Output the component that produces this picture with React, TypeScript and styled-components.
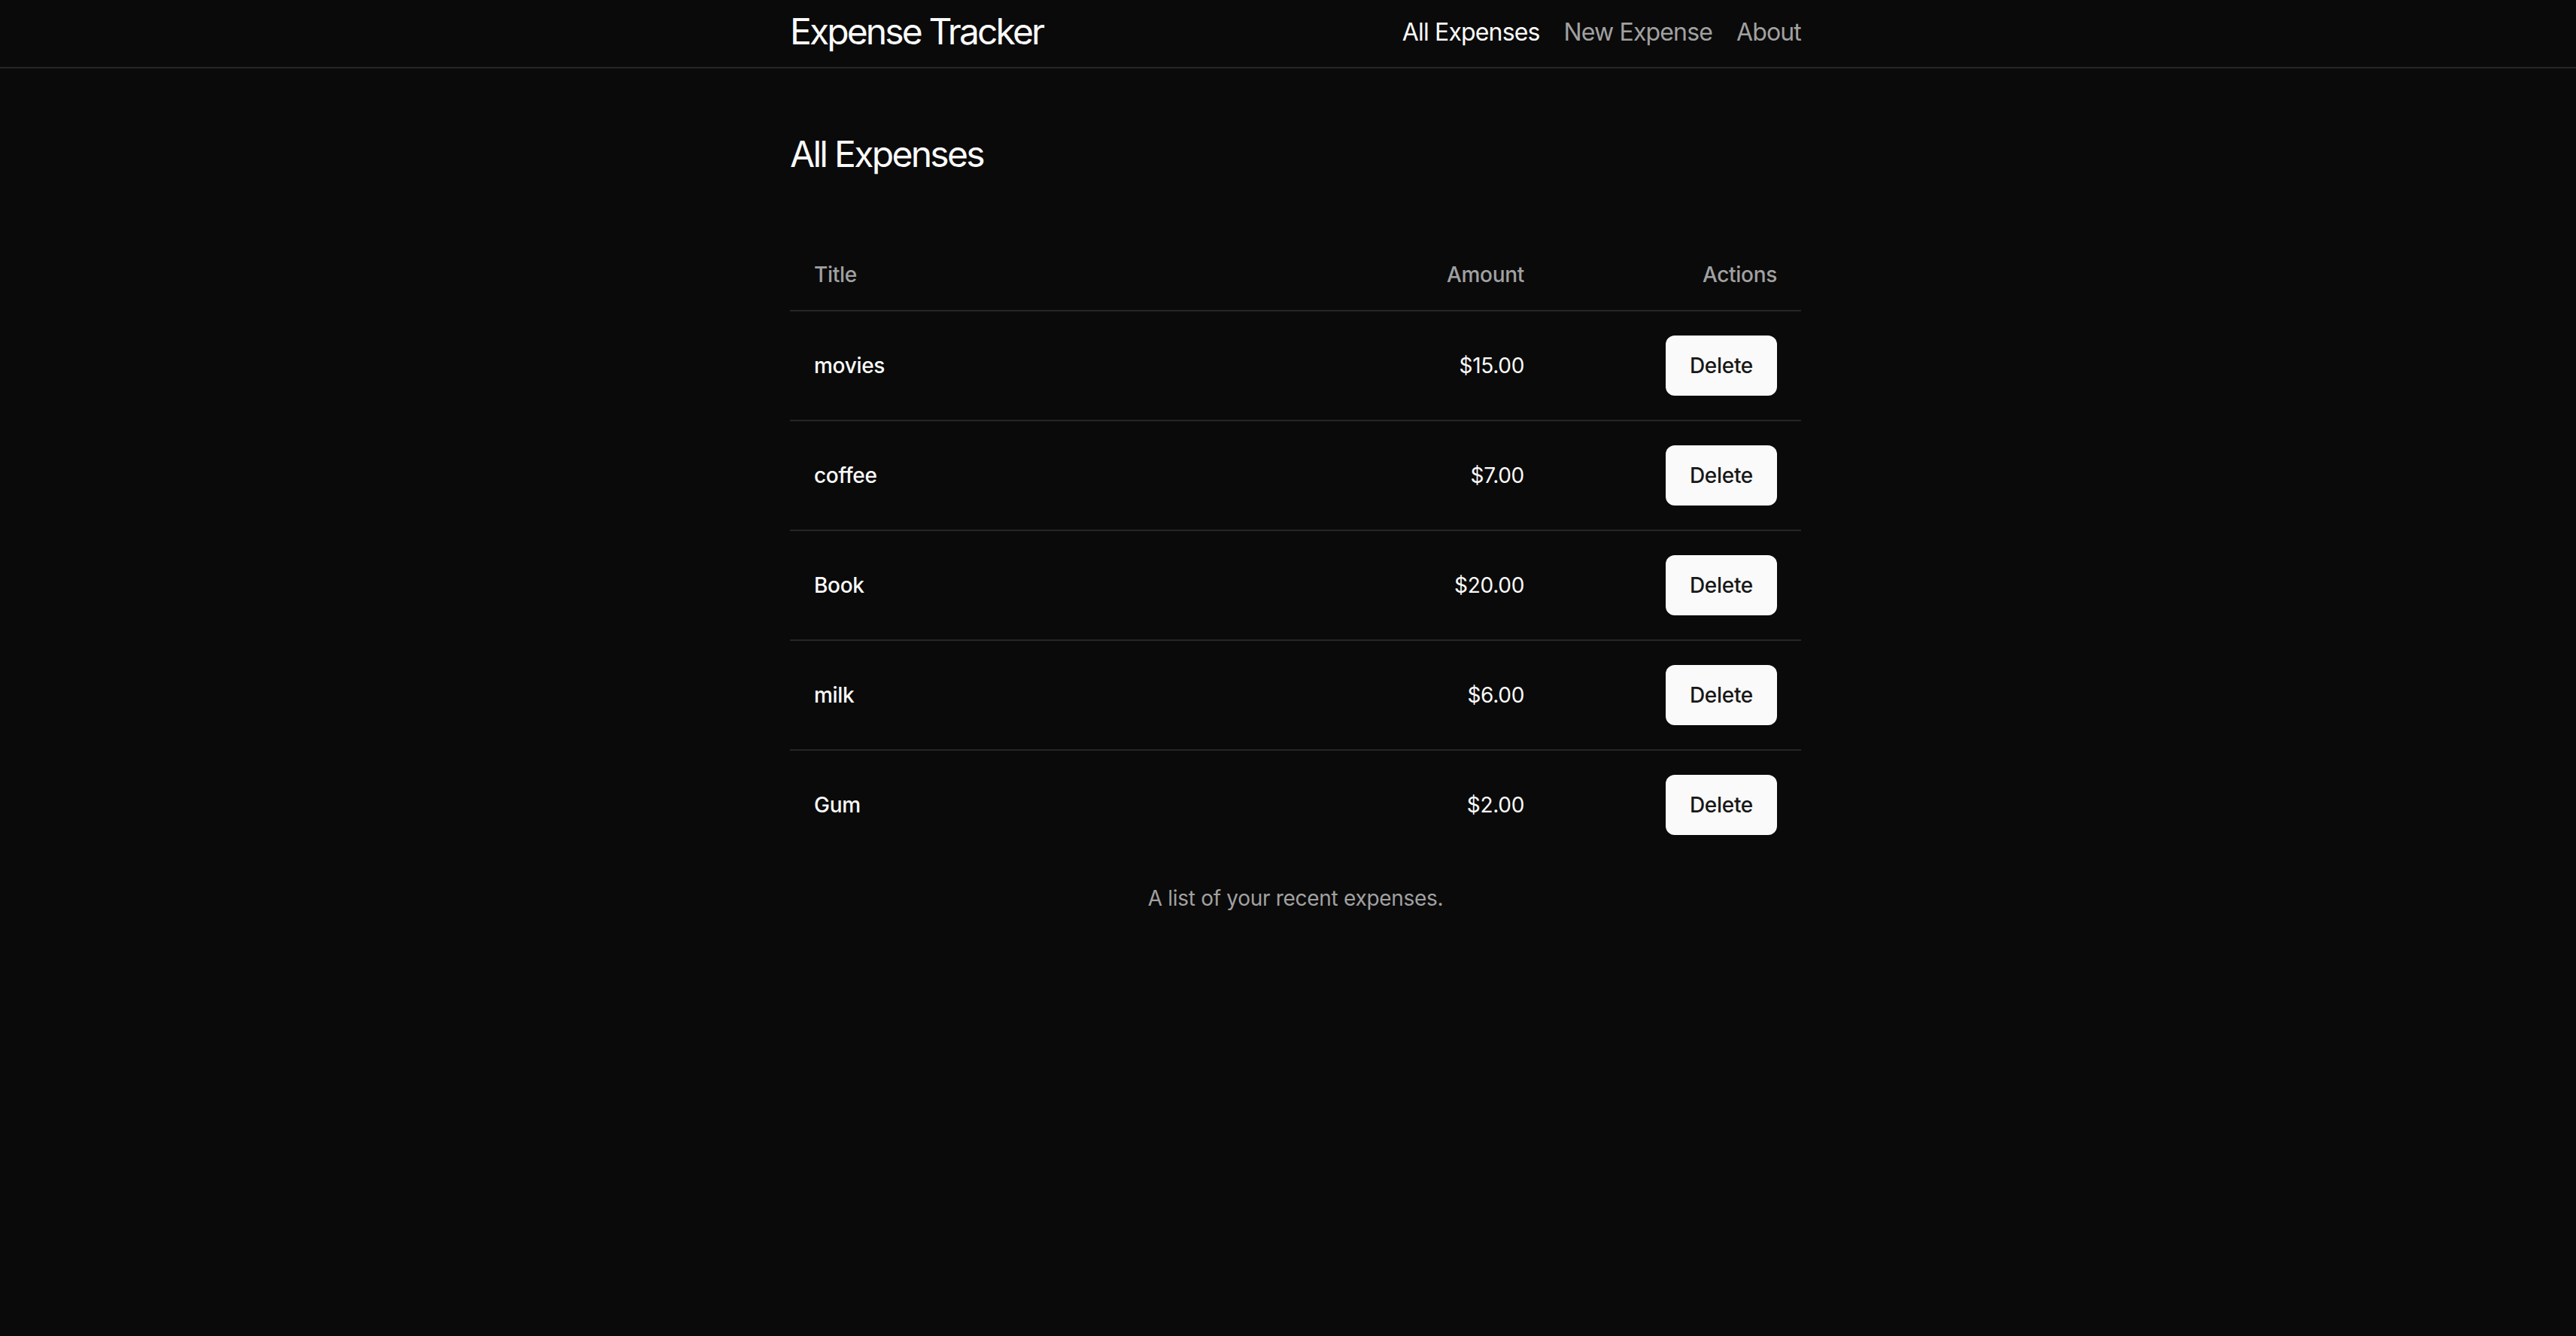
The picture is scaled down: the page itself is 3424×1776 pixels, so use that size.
import React from "react";
import styled, { createGlobalStyle } from "styled-components";

const GlobalStyle = createGlobalStyle`
  * { box-sizing: border-box; }
  html, body { margin: 0; padding: 0; background: #0a0a0a; }
  body {
    font-family: Inter, "Noto Sans", "Liberation Sans", sans-serif;
    color: #fafafa;
    -webkit-font-smoothing: antialiased;
  }
`;

const Page = styled.div`
  min-height: 100vh;
  background: #0a0a0a;
`;

const Header = styled.header`
  height: 91px;
  padding-bottom: 4px;
  border-bottom: 2px solid #262626;
  display: flex;
  align-items: center;
`;

const Container = styled.div`
  width: 1344px;
  margin-left: calc(50% - 662px);
`;

const HeaderInner = styled(Container)`
  display: flex;
  align-items: center;
  justify-content: space-between;
`;

const Brand = styled.div`
  font-size: 48px;
  line-height: 64px;
  font-weight: 400;
  letter-spacing: -2.9px;
  color: #fafafa;
  margin-top: -2px;
`;

const Nav = styled.nav`
  display: flex;
  align-items: center;
  gap: 32px;
`;

const NavLink = styled.a<{ $active?: boolean }>`
  font-size: 32px;
  line-height: 48px;
  font-weight: 400;
  letter-spacing: -0.85px;
  color: ${(p) => (p.$active ? "#fafafa" : "#a1a1a1")};
  text-decoration: none;
  cursor: pointer;
`;

const Main = styled(Container)`
  padding-top: 82px;
`;

const Heading = styled.h1`
  margin: 0 0 80px;
  font-size: 48px;
  line-height: 64px;
  font-weight: 400;
  letter-spacing: -2.7px;
`;

const Table = styled.table`
  width: 100%;
  border-collapse: collapse;
  font-size: 28px;
  line-height: 40px;
  letter-spacing: -0.3px;
`;

const Caption = styled.caption`
  caption-side: bottom;
  margin-top: 32px;
  color: #a1a1a1;
  font-size: 28px;
  line-height: 40px;
  text-align: center;
`;

const HeadRow = styled.tr`
  height: 96px;
  border-bottom: 2px solid #262626;
`;

const Th = styled.th<{ $align?: "left" | "right"; $width?: number }>`
  padding: 0 32px;
  text-align: ${(p) => p.$align ?? "left"};
  font-weight: 500;
  color: #a1a1a1;
  ${(p) => (p.$width ? `width: ${p.$width}px;` : "")}
`;

const Row = styled.tr`
  border-bottom: 2px solid #262626;
  &:last-child { border-bottom: 0; }
`;

const Td = styled.td<{ $align?: "left" | "right"; $weight?: number }>`
  padding: 32px;
  vertical-align: middle;
  text-align: ${(p) => p.$align ?? "left"};
  font-weight: ${(p) => p.$weight ?? 400};
  color: #fafafa;
`;

const DeleteButton = styled.button`
  height: 80px;
  padding: 0 32px;
  border: 0;
  border-radius: 12px;
  background: #fafafa;
  color: #171717;
  font-family: inherit;
  font-size: 28px;
  line-height: 40px;
  font-weight: 500;
  letter-spacing: -0.3px;
  cursor: pointer;
`;

const expenses = [
  { title: "movies", amount: 15 },
  { title: "coffee", amount: 7 },
  { title: "Book", amount: 20 },
  { title: "milk", amount: 6 },
  { title: "Gum", amount: 2 },
];

export default function App() {
  return (
    <Page>
      <GlobalStyle />
      <Header>
        <HeaderInner>
          <Brand>Expense Tracker</Brand>
          <Nav>
            <NavLink $active>All Expenses</NavLink>
            <NavLink>New Expense</NavLink>
            <NavLink>About</NavLink>
          </Nav>
        </HeaderInner>
      </Header>
      <Main>
        <Heading>All Expenses</Heading>
        <Table>
          <Caption>A list of your recent expenses.</Caption>
          <thead>
            <HeadRow>
              <Th>Title</Th>
              <Th $align="right" $width={400}>Amount</Th>
              <Th $align="right" $width={336}>Actions</Th>
            </HeadRow>
          </thead>
          <tbody>
            {expenses.map((e) => (
              <Row key={e.title}>
                <Td $weight={500}>{e.title}</Td>
                <Td $align="right">${e.amount.toFixed(2)}</Td>
                <Td $align="right">
                  <DeleteButton>Delete</DeleteButton>
                </Td>
              </Row>
            ))}
          </tbody>
        </Table>
      </Main>
    </Page>
  );
}
